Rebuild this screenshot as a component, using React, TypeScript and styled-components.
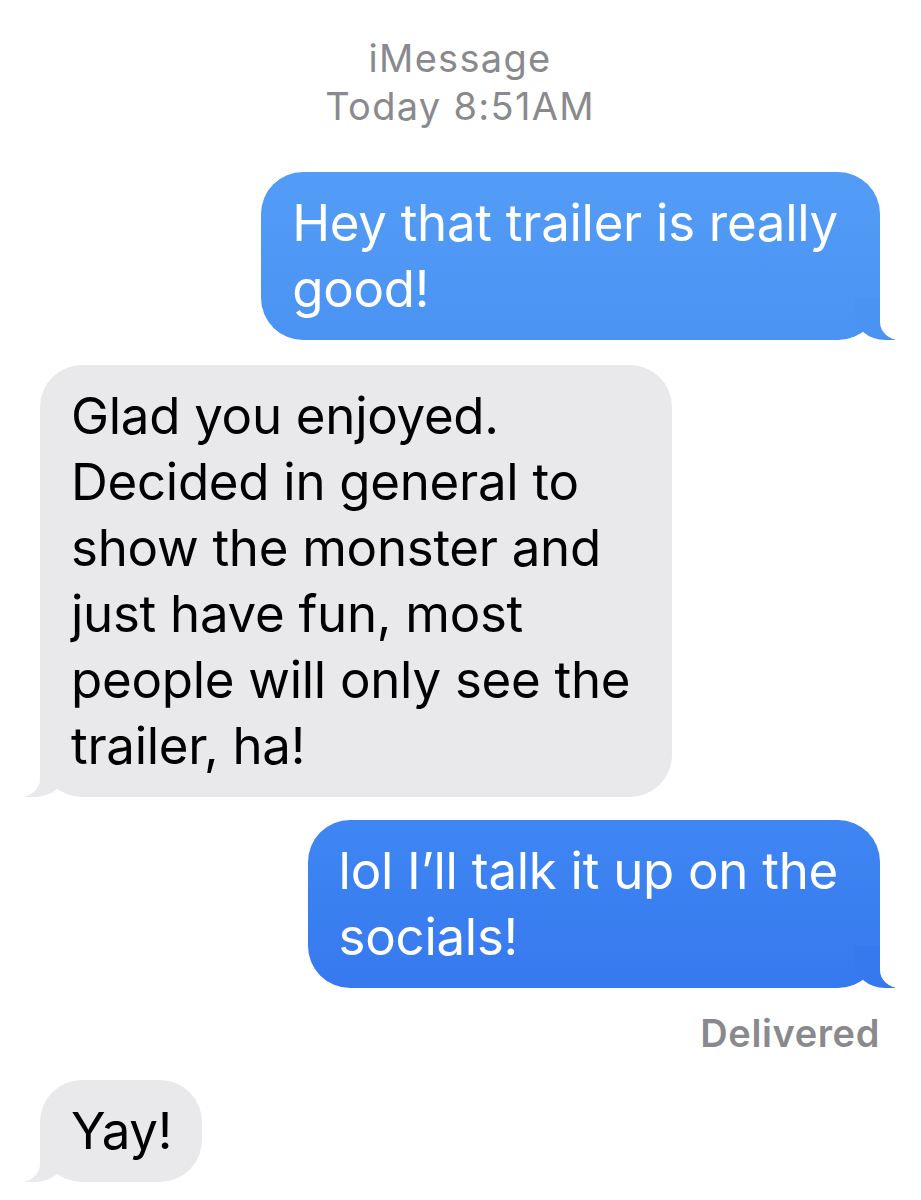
import React from "react";
import styled, { createGlobalStyle, css } from "styled-components";

const Global = createGlobalStyle`
  html, body { margin: 0; padding: 0; background: #ffffff; }
  body { font-family: Inter, "Noto Sans", sans-serif; -webkit-font-smoothing: antialiased; }
`;

const Page = styled.main`
  width: 921px;
  height: 1200px;
  box-sizing: border-box;
  padding: 34px 41px 0 40px;
  display: flex;
  flex-direction: column;
  overflow: hidden;
  background: #ffffff;
`;

const Header = styled.header`
  display: flex;
  flex-direction: column;
  align-items: center;
  color: #8a8a8e;
  font-size: 38px;
  line-height: 48px;
  letter-spacing: 1.3px;
  font-weight: 400;
  margin-bottom: 42px;
`;

const HeaderLine = styled.div`
  white-space: nowrap;
`;

const Row = styled.div<{ $side: "left" | "right"; $gap: number }>`
  display: flex;
  justify-content: ${(p) => (p.$side === "right" ? "flex-end" : "flex-start")};
  margin-bottom: ${(p) => p.$gap}px;
`;

const Bubble = styled.div<{ $kind: "sent" | "sentDark" | "received"; $padRight: number }>`
  position: relative;
  width: fit-content;
  box-sizing: border-box;
  padding: 18px ${(p) => p.$padRight}px 18px 31px;
  border-radius: 42px;
  font-size: 51px;
  line-height: 66px;
  letter-spacing: -0.28px;
  font-weight: 400;

  ${(p) =>
    p.$kind === "received"
      ? css`
          background: #e9e9eb;
          color: #000000;
          --tail: #e9e9eb;
        `
      : p.$kind === "sent"
      ? css`
          background: linear-gradient(180deg, #539cf6 0%, #4b93f3 100%);
          color: #ffffff;
          --tail: #4b93f3;
        `
      : css`
          background: linear-gradient(180deg, #3f86f2 0%, #3679ef 100%);
          color: #ffffff;
          --tail: #3679ef;
        `}

  &::before,
  &::after {
    content: "";
    position: absolute;
    bottom: 0;
    height: 42px;
  }

  ${(p) =>
    p.$kind === "received"
      ? css`
          &::before {
            left: -15px;
            width: 40px;
            background: var(--tail);
            border-bottom-right-radius: 30px 26px;
          }
          &::after {
            left: -34px;
            width: 34px;
            background: #ffffff;
            border-bottom-right-radius: 20px 18px;
          }
        `
      : css`
          &::before {
            right: -15px;
            width: 40px;
            background: var(--tail);
            border-bottom-left-radius: 30px 26px;
          }
          &::after {
            right: -34px;
            width: 34px;
            background: #ffffff;
            border-bottom-left-radius: 20px 18px;
          }
        `}
`;

const Line = styled.span`
  position: relative;
  z-index: 1;
  display: block;
  white-space: nowrap;
`;

const Status = styled.div`
  align-self: flex-end;
  color: #8a8a8e;
  font-size: 38px;
  line-height: 46px;
  font-weight: 600;
  letter-spacing: 0.6px;
  margin-bottom: 24px;
`;

type Msg = {
  side: "left" | "right";
  kind: "sent" | "sentDark" | "received";
  lines: string[];
  gap: number;
  padRight: number;
};

const messages: Msg[] = [
  { side: "right", kind: "sent", lines: ["Hey that trailer is really", "good!"], gap: 25, padRight: 42 },
  {
    side: "left",
    kind: "received",
    lines: [
      "Glad you enjoyed.",
      "Decided in general to",
      "show the monster and",
      "just have fun, most",
      "people will only see the",
      "trailer, ha!",
    ],
    gap: 23,
    padRight: 42,
  },
  { side: "right", kind: "sentDark", lines: ["lol I\u2019ll talk it up on the", "socials!"], gap: 22, padRight: 42 },
];

export default function App() {
  return (
    <>
      <Global />
      <Page>
        <Header>
          <HeaderLine>iMessage</HeaderLine>
          <HeaderLine>Today 8:51AM</HeaderLine>
        </Header>
        {messages.map((m, i) => (
          <Row key={i} $side={m.side} $gap={m.gap}>
            <Bubble $kind={m.kind} $padRight={m.padRight}>
              {m.lines.map((l, j) => (
                <Line key={j}>{l}</Line>
              ))}
            </Bubble>
          </Row>
        ))}
        <Status>Delivered</Status>
        <Row $side="left" $gap={0}>
          <Bubble $kind="received" $padRight={30}>
            <Line>Yay!</Line>
          </Bubble>
        </Row>
      </Page>
    </>
  );
}
